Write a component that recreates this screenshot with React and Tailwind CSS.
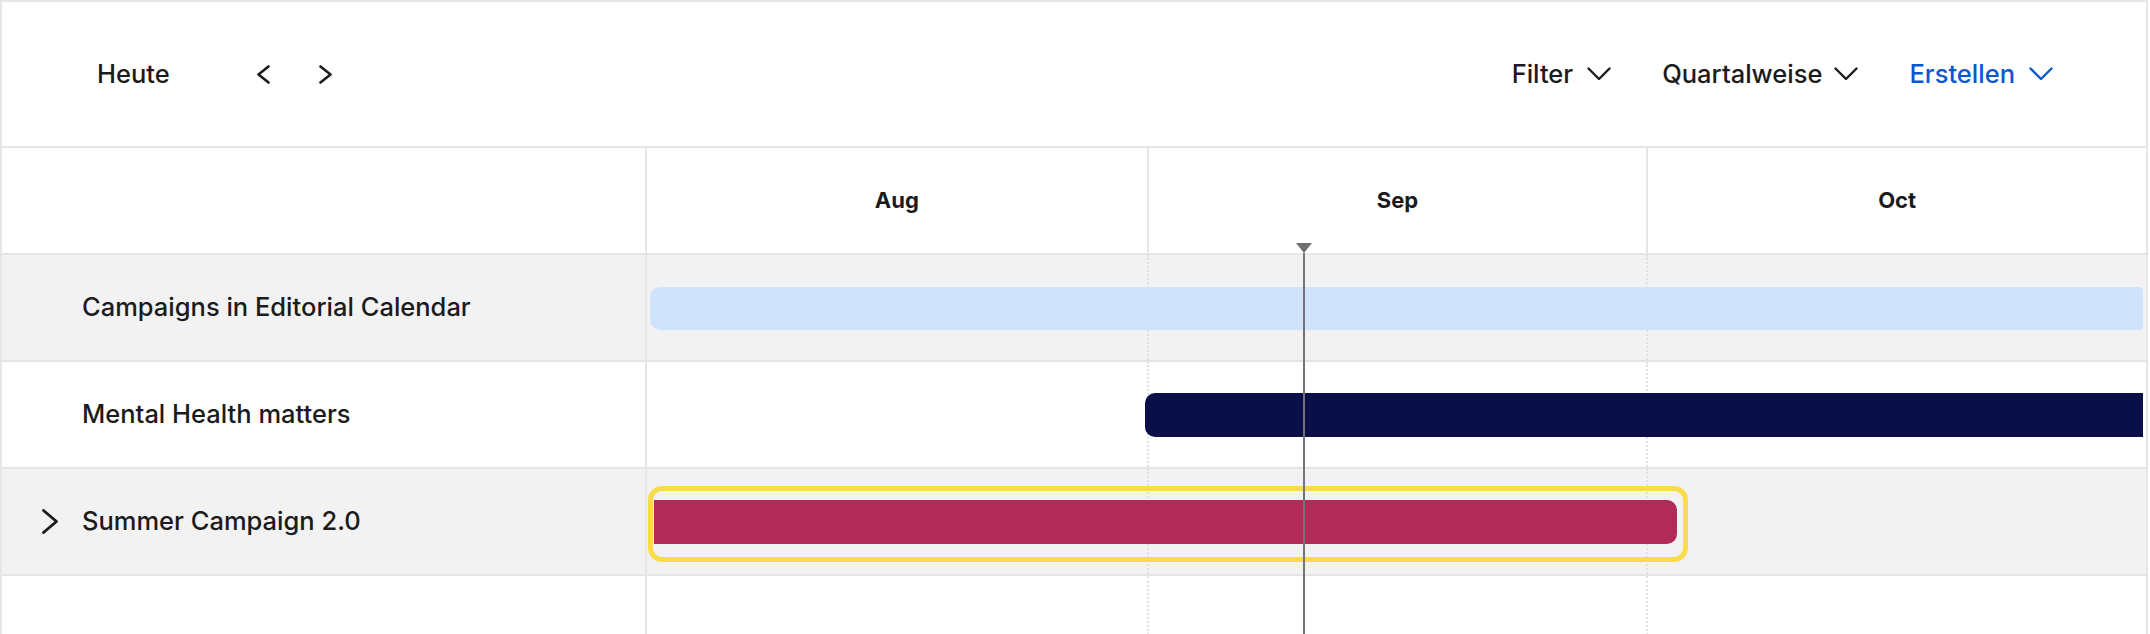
import React from 'react';

const months = ['Aug', 'Sep', 'Oct'];

const rows = [
  { name: 'Campaigns in Editorial Calendar', shaded: true, bar: 'campaigns' },
  { name: 'Mental Health matters', shaded: false, bar: 'mental' },
  { name: 'Summer Campaign 2.0', shaded: true, bar: 'summer', expandable: true },
  { name: '', shaded: false, filler: true },
];

function ChevronDown() {
  return (
    <svg width="24" height="14" viewBox="0 0 24 14" fill="none">
      <path d="M1.5 1.5L12 12L22.5 1.5" stroke="currentColor" strokeWidth="2.4" strokeLinecap="round" strokeLinejoin="round" />
    </svg>
  );
}

function ChevronSide({ dir = 'left', w = 15, h = 19, stroke = 2.6 }) {
  const d = dir === 'left'
    ? `M${w - 2.5} 1.5L2.5 ${h / 2}L${w - 2.5} ${h - 1.5}`
    : `M2.5 1.5L${w - 2.5} ${h / 2}L2.5 ${h - 1.5}`;
  return (
    <svg width={w} height={h} viewBox={`0 0 ${w} ${h}`} fill="none">
      <path d={d} stroke="currentColor" strokeWidth={stroke} strokeLinecap="round" strokeLinejoin="round" />
    </svg>
  );
}

function Bar({ kind }) {
  if (kind === 'campaigns') {
    return <div className="absolute top-[32px] left-[3px] right-[3px] h-[43px] bg-[#d0e3fc] rounded-l-[10px] rounded-r-[4px]" />;
  }
  if (kind === 'mental') {
    return <div className="absolute top-[31px] left-[498px] right-[3px] h-[44px] bg-[#0a0f4a] rounded-l-[10px]" />;
  }
  if (kind === 'summer') {
    return (
      <>
        <div className="absolute top-[17px] left-[1px] w-[1040px] h-[76px] border-[5px] border-[#fadc4a] rounded-[14px]" />
        <div className="absolute top-[31px] left-[7px] w-[1023px] h-[44px] bg-[#b02b58] rounded-r-[10px]" />
      </>
    );
  }
  return null;
}

export default function App() {
  return (
    <div className="w-[2148px] h-[634px] overflow-hidden bg-white border-t-2 border-x-2 border-[#e6e6e6] text-[#1b1b1b] font-['Inter',sans-serif]">
      <header className="h-[146px] border-b-2 border-[#e6e6e6] flex items-center justify-between pl-[95px] pr-[93px]">
        <div className="flex items-center">
          <span className="text-[25.5px] font-medium">Heute</span>
          <button className="ml-[86px] text-[#1b1b1b]"><ChevronSide dir="left" /></button>
          <button className="ml-[47px] text-[#1b1b1b]"><ChevronSide dir="right" /></button>
        </div>
        <div className="flex items-center gap-[51px] text-[25.5px] font-medium">
          <button className="flex items-center gap-[14px]">Filter <ChevronDown /></button>
          <button className="flex items-center gap-[12px]">Quartalweise <ChevronDown /></button>
          <button className="flex items-center gap-[14px] text-[#0b57d0]">Erstellen <ChevronDown /></button>
        </div>
      </header>

      <div className="flex h-full">
        <div className="w-[645px] shrink-0 border-r-2 border-[#e6e6e6]">
          <div className="h-[107px] border-b-2 border-[#e6e6e6]" />
          {rows.map((r, i) => (
            <div
              key={i}
              className={`h-[107px] flex items-center pl-[39px] ${r.filler ? '' : 'border-b-2 border-[#e4e4e4]'} ${r.shaded ? 'bg-[#f2f2f2]' : 'bg-white'}`}
            >
              <div className="w-[41px] flex items-center">
                {r.expandable && <ChevronSide dir="right" w={18} h={25} stroke={2.9} />}
              </div>
              <span className="text-[25.5px] font-medium">{r.name}</span>
            </div>
          ))}
        </div>

        <div className="relative flex-1">
          <div className="h-[107px] grid grid-cols-3 border-b-2 border-[#e6e6e6]">
            {months.map((m, i) => (
              <div key={m} className={`flex items-center justify-center text-[22px] font-bold ${i > 0 ? 'border-l-2 border-[#e6e6e6]' : ''}`}>
                {m}
              </div>
            ))}
          </div>

          {rows.map((r, i) => (
            <div
              key={i}
              className={`relative h-[107px] grid grid-cols-3 ${r.filler ? '' : 'border-b-2 border-[#e4e4e4]'} ${r.shaded ? 'bg-[#f2f2f2]' : 'bg-white'}`}
            >
              {months.map((m, j) => (
                <div key={m} className={j > 0 ? 'border-l-2 border-dotted border-[#e0e0e0]' : ''} />
              ))}
              {r.bar && <Bar kind={r.bar} />}
            </div>
          ))}

          {/* today marker */}
          <div className="absolute top-[95px] left-[649px] w-0 h-0 border-l-[8.5px] border-r-[8.5px] border-t-[10px] border-l-transparent border-r-transparent border-t-[#6e6e73] z-10" />
          <div className="absolute top-[105px] bottom-0 left-[656px] w-[2px] bg-[#737378] z-10" />
        </div>
      </div>
    </div>
  );
}
